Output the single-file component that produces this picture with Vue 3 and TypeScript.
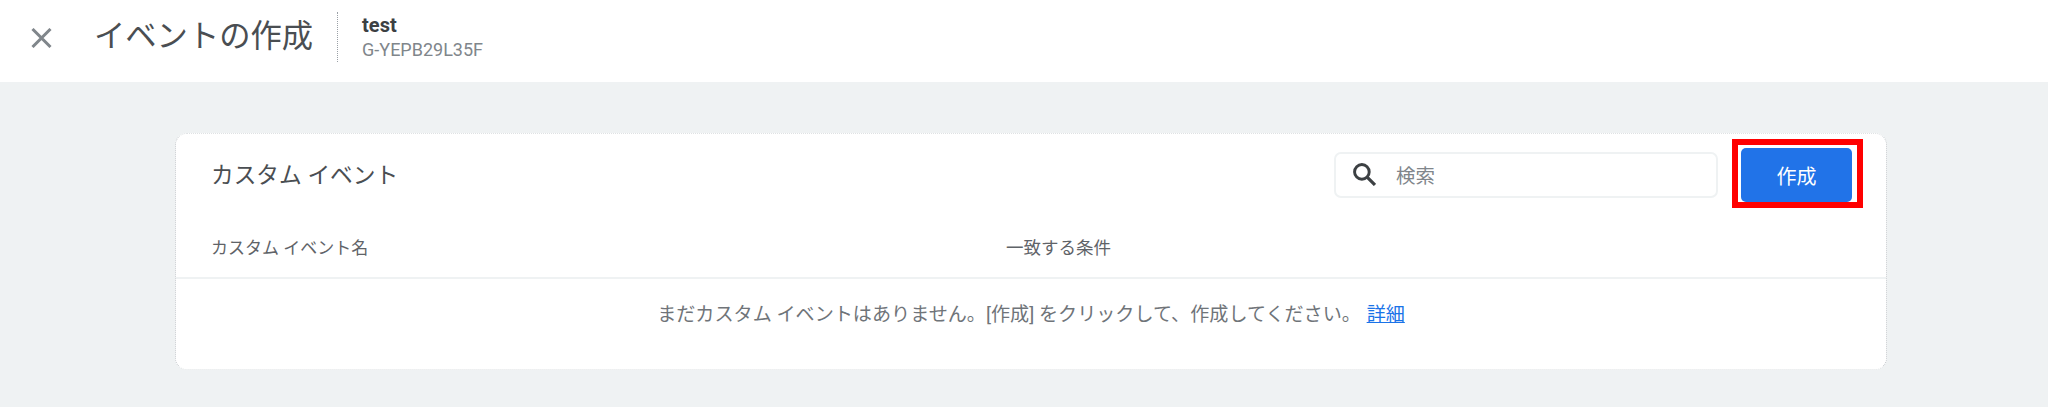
<template>
  <div class="page">
    <header class="topbar">
      <button class="close-btn" type="button" aria-label="閉じる">
        <svg width="21" height="20" viewBox="0 0 21 20">
          <path d="M1.5 1 L19.5 19 M19.5 1 L1.5 19" stroke="#80868b" stroke-width="3" fill="none" />
        </svg>
      </button>
      <h1 class="title">イベントの作成</h1>
      <div class="stream">
        <div class="stream-name">{{ streamName }}</div>
        <div class="stream-id">{{ streamId }}</div>
      </div>
    </header>

    <main class="content">
      <section class="card">
        <div class="card-head">
          <h2 class="card-title">カスタム イベント</h2>
          <div class="search">
            <svg width="23" height="23" viewBox="0 0 22 22">
              <circle cx="8.5" cy="8.5" r="7" stroke="#3c4043" stroke-width="2.8" fill="none" />
              <path d="M13.5 13.5 L21 21" stroke="#3c4043" stroke-width="3" fill="none" />
            </svg>
            <span class="search-text">検索</span>
          </div>
          <div class="create-wrap">
            <button class="create-btn" type="button">作成</button>
            <span class="highlight"></span>
          </div>
        </div>

        <div class="columns">
          <span>カスタム イベント名</span>
          <span class="col-match">一致する条件</span>
        </div>

        <p class="empty">
          まだカスタム イベントはありません。[作成] をクリックして、作成してください。
          <a class="more" href="#">詳細</a>
        </p>
      </section>
    </main>
  </div>
</template>

<script setup lang="ts">
const streamName: string = 'test';
const streamId: string = 'G-YEPB29L35F';
</script>

<style>
html,
body {
  margin: 0;
  background: #eff2f3;
}
</style>

<style scoped>
.page {
  width: 2048px;
  height: 407px;
  overflow: hidden;
  background-color: #eff2f3;
  font-family: Roboto, "Noto Sans CJK JP", sans-serif;
  color: #3c4043;
}

.topbar {
  display: flex;
  align-items: center;
  height: 82px;
  background-color: #fff;
}

.close-btn {
  display: flex;
  width: 21px;
  height: 20px;
  margin: 0 0 6px 31px;
  padding: 0;
  border: none;
  background: none;
}

.title {
  margin: 0 24px 8px 42px;
  font-size: 31.3px;
  font-weight: 400;
  line-height: 40px;
  color: #4a4e52;
}

.stream {
  box-sizing: border-box;
  height: 50px;
  margin-bottom: 8px;
  padding: 1px 0 0 24px;
  border-left: 1px dotted #9aa0a6;
}

.stream-name {
  font-size: 20px;
  font-weight: 700;
  line-height: 24px;
}

.stream-id {
  margin-top: 2px;
  font-size: 18px;
  line-height: 22px;
  color: #80868b;
}

.content {
  padding: 51px 161px 0 175px;
}

.card {
  box-sizing: border-box;
  height: 237px;
  border: 1px dotted #c4c8cc;
  border-top-color: #dfe2e4;
  border-bottom-color: #dfe2e4;
  border-radius: 12px;
  background-color: #fff;
}

.card-head {
  display: flex;
  align-items: flex-start;
  height: 92px;
  padding-left: 35px;
}

.card-title {
  flex: 1;
  margin: 26px 0 0;
  font-size: 22.7px;
  font-weight: 400;
  line-height: 32px;
  color: #4a4e52;
}

.search {
  display: flex;
  align-items: center;
  box-sizing: border-box;
  width: 384px;
  height: 46px;
  margin: 18px 23px 0 0;
  padding: 0 0 2px 17px;
  border: 2px solid #eff2f3;
  border-radius: 7px;
}

.search-text {
  margin-left: 20px;
  font-size: 19.5px;
  color: #80868b;
}

.create-wrap {
  position: relative;
  display: flex;
  margin: 14px 34px 0 0;
}

.create-btn {
  width: 111px;
  height: 54px;
  border: none;
  border-radius: 5px;
  background-color: #2173e8;
  font-family: inherit;
  font-size: 20px;
  color: #fff;
}

.highlight {
  position: absolute;
  top: -9px;
  left: -9px;
  right: -11px;
  bottom: -6px;
  border: 6px solid #ff0000;
}

.columns {
  display: grid;
  grid-template-columns: 795px 1fr;
  box-sizing: border-box;
  height: 53px;
  padding: 10px 0 0 35px;
  border-bottom: 2px solid #eff2f3;
  font-size: 17px;
  line-height: 24px;
  color: #5f6368;
}

.col-match {
  font-size: 17.5px;
}

.empty {
  margin: 0;
  padding-top: 22px;
  text-align: center;
  font-size: 19.1px;
  line-height: 28px;
  color: #6f7479;
}

.more {
  margin-left: 1px;
  color: #1a73e8;
}
</style>
